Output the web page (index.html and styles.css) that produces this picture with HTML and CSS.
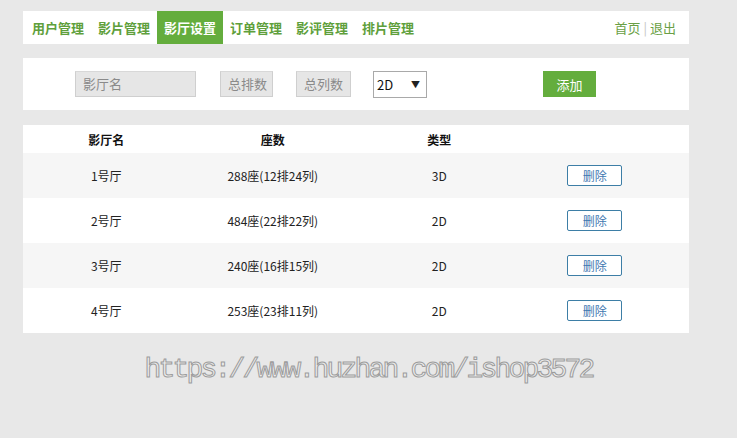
FILE: index.html
```html
<!DOCTYPE html>
<html lang="zh-CN">
<head>
<meta charset="utf-8">
<title>影厅设置</title>
<link rel="stylesheet" href="styles.css">
</head>
<body>
<div class="page">
  <nav class="topnav">
    <a class="tab" href="#">用户管理</a>
    <a class="tab" href="#">影片管理</a>
    <a class="tab active" href="#">影厅设置</a>
    <a class="tab" href="#">订单管理</a>
    <a class="tab" href="#">影评管理</a>
    <a class="tab" href="#">排片管理</a>
    <div class="toplinks">
      <a href="#">首页</a><span class="sep">|</span><a href="#">退出</a>
    </div>
  </nav>

  <form class="panel addform">
    <div class="field name">影厅名</div>
    <div class="field rows">总排数</div>
    <div class="field cols">总列数</div>
    <div class="select"><span>2D</span><span class="arrow">▼</span></div>
    <button type="button" class="btn-add">添加</button>
  </form>

  <div class="panel tablepanel">
    <table class="halls">
      <thead>
        <tr><th>影厅名</th><th>座数</th><th>类型</th><th></th></tr>
      </thead>
      <tbody>
        <tr><td>1号厅</td><td>288座(12排24列)</td><td>3D</td><td><button type="button" class="btn-del">删除</button></td></tr>
        <tr><td>2号厅</td><td>484座(22排22列)</td><td>2D</td><td><button type="button" class="btn-del">删除</button></td></tr>
        <tr><td>3号厅</td><td>240座(16排15列)</td><td>2D</td><td><button type="button" class="btn-del">删除</button></td></tr>
        <tr><td>4号厅</td><td>253座(23排11列)</td><td>2D</td><td><button type="button" class="btn-del">删除</button></td></tr>
      </tbody>
    </table>
  </div>
</div>
<div class="mark">https://www.huzhan.com/ishop3572</div>
</body>
</html>
```

FILE: styles.css
```css
html, body {
  margin: 0;
  padding: 0;
  background: #e8e8e8;
  font-family: "Noto Sans CJK SC", "Microsoft YaHei", sans-serif;
  font-size: 12px;
  color: #222;
}

.page {
  width: 666px;
  margin-left: 23px;
  padding-top: 11px;
}

/* top navigation */
.topnav {
  display: flex;
  align-items: stretch;
  height: 33px;
  background: #fff;
  padding-left: 2px;
}

.tab {
  display: block;
  padding: 0 7px;
  line-height: 33px;
  font-size: 13px;
  font-weight: bold;
  color: #5f9f3c;
  text-decoration: none;
}

.tab.active {
  background: #64ad3d;
  color: #fff;
}

.toplinks {
  margin-left: auto;
  padding-right: 13px;
  line-height: 33px;
  font-size: 13px;
}

.toplinks a {
  color: #6a9f45;
  text-decoration: none;
}

.toplinks .sep {
  color: #c4c4c4;
  margin: 0 3px;
}

/* panels */
.panel {
  background: #fff;
}

.addform {
  display: flex;
  align-items: flex-start;
  margin: 14px 0 0;
  height: 52px;
  padding: 13px 0 0 52px;
  box-sizing: border-box;
}

.field {
  height: 26px;
  box-sizing: border-box;
  background: #e6e6e6;
  border: 1px solid #cfcfcf;
  border-top-color: #d8d8d8;
  color: #8a8a8a;
  font-size: 13px;
  line-height: 24px;
  padding-left: 7px;
}

.field.name { width: 121px; }
.field.rows { width: 53px; margin-left: 24px; }
.field.cols { width: 55px; margin-left: 23px; }

.select {
  display: flex;
  justify-content: space-between;
  align-items: center;
  width: 54px;
  height: 27px;
  box-sizing: border-box;
  margin-left: 22px;
  border: 1px solid #a9a9a9;
  background: #fff;
  padding: 0 6px 0 3px;
  font-size: 13px;
  color: #111;
}

.select .arrow {
  font-size: 9px;
  color: #222;
}

.btn-add {
  margin-left: 116px;
  width: 53px;
  height: 26px;
  border: none;
  background: #64ad3d;
  color: #fff;
  font-family: inherit;
  font-size: 13px;
  padding: 0;
}

/* hall list */
.tablepanel {
  margin-top: 15px;
}

.halls {
  width: 100%;
  border-collapse: collapse;
  table-layout: fixed;
}

.halls th {
  height: 28px;
  padding: 0;
  font-weight: bold;
  font-size: 12px;
  color: #111;
  text-align: center;
}

.halls td {
  height: 45px;
  padding: 0;
  text-align: center;
  color: #222;
}

.halls tbody tr:nth-child(odd) {
  background: #f6f6f6;
}

.btn-del {
  width: 55px;
  height: 21px;
  margin-right: 22px;
  padding: 0;
  background: #fff;
  border: 1px solid #3d7ea6;
  border-radius: 2px;
  color: #3f78b0;
  font-family: inherit;
  font-size: 12px;
  line-height: 19px;
}

/* site address line */
.mark {
  margin-top: 21px;
  text-align: center;
  font-family: "Liberation Mono", monospace;
  font-size: 28px;
  letter-spacing: -2.8px;
  color: #ececec;
  -webkit-text-stroke: 1px #9c9c9c;
}
```
